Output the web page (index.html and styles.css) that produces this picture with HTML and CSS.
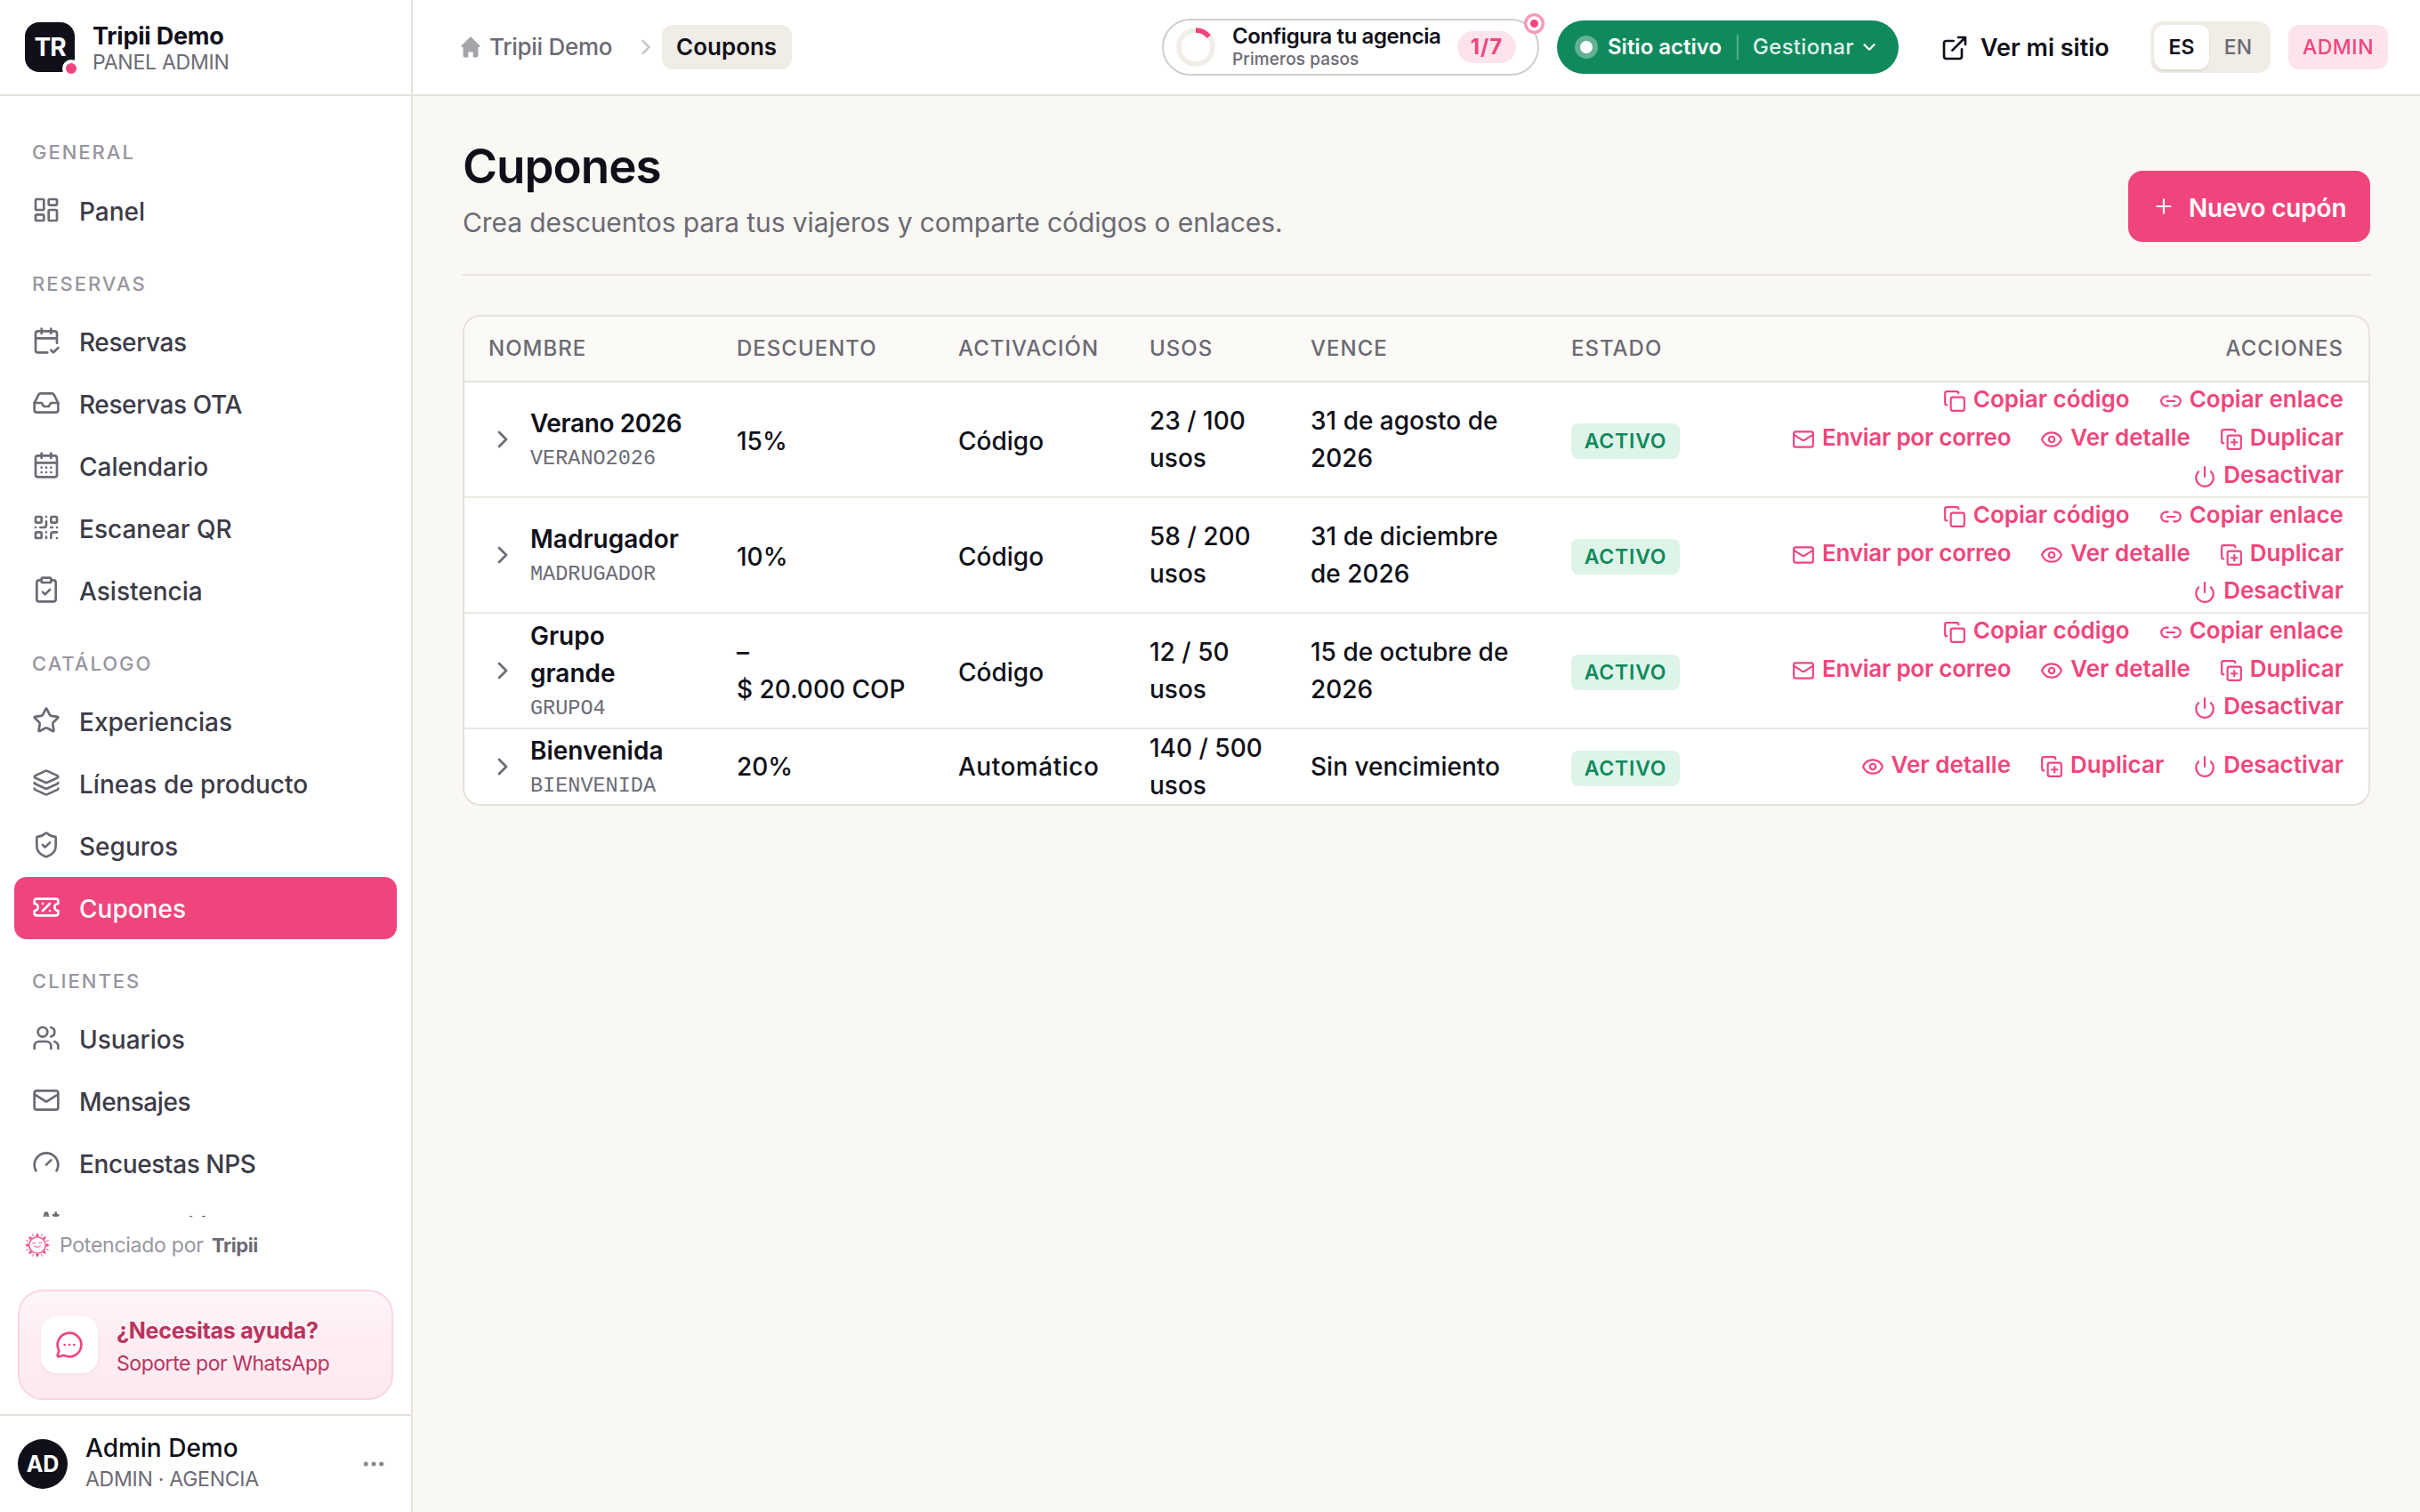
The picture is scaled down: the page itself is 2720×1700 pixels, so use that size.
FILE: index.html
```html
<!DOCTYPE html>
<html lang="es">
<head>
<meta charset="utf-8">
<title>Cupones</title>
<link rel="stylesheet" href="styles.css">
</head>
<body>
<svg class="defs" aria-hidden="true">
  <symbol id="grid" viewBox="0 0 24 24"><rect x="3" y="3" width="7" height="9" rx="1"/><rect x="14" y="3" width="7" height="5" rx="1"/><rect x="14" y="12" width="7" height="9" rx="1"/><rect x="3" y="16" width="7" height="5" rx="1"/></symbol>
  <symbol id="calcheck" viewBox="0 0 24 24"><path d="M8 2v4M16 2v4M21 14V6a2 2 0 0 0-2-2H5a2 2 0 0 0-2 2v14a2 2 0 0 0 2 2h8M3 10h18M16 20l2 2 4-4"/></symbol>
  <symbol id="inbox" viewBox="0 0 24 24"><path d="M22 12h-6l-2 3h-4l-2-3H2"/><path d="M5.45 5.11 2 12v6a2 2 0 0 0 2 2h16a2 2 0 0 0 2-2v-6l-3.45-6.89A2 2 0 0 0 16.76 4H7.24a2 2 0 0 0-1.79 1.11z"/></symbol>
  <symbol id="caldays" viewBox="0 0 24 24"><path d="M8 2v4M16 2v4M3 10h18M8 14h.01M12 14h.01M16 14h.01M8 18h.01M12 18h.01M16 18h.01"/><rect x="3" y="4" width="18" height="18" rx="2"/></symbol>
  <symbol id="qr" viewBox="0 0 24 24"><rect x="3" y="3" width="5" height="5" rx="1"/><rect x="16" y="3" width="5" height="5" rx="1"/><rect x="3" y="16" width="5" height="5" rx="1"/><path d="M21 16h-3a2 2 0 0 0-2 2v3M21 21v.01M12 7v3a2 2 0 0 1-2 2H7M3 12h.01M12 3h.01M12 16v.01M16 12h1M21 12v.01M12 21v-1"/></symbol>
  <symbol id="clip" viewBox="0 0 24 24"><rect x="8" y="2" width="8" height="4" rx="1"/><path d="M16 4h2a2 2 0 0 1 2 2v14a2 2 0 0 1-2 2H6a2 2 0 0 1-2-2V6a2 2 0 0 1 2-2h2M9 14l2 2 4-4"/></symbol>
  <symbol id="star" viewBox="0 0 24 24"><path d="M11.5 2.3a.53.53 0 0 1 .95 0l2.3 4.68a2.1 2.1 0 0 0 1.6 1.16l5.17.76a.53.53 0 0 1 .3.9l-3.74 3.64a2.1 2.1 0 0 0-.61 1.88l.88 5.14a.53.53 0 0 1-.77.56l-4.62-2.43a2.1 2.1 0 0 0-1.97 0L6.4 21.01a.53.53 0 0 1-.77-.56l.88-5.14a2.1 2.1 0 0 0-.61-1.88L2.16 9.8a.53.53 0 0 1 .3-.9l5.16-.76a2.1 2.1 0 0 0 1.6-1.16z"/></symbol>
  <symbol id="layers" viewBox="0 0 24 24"><path d="M12.83 2.18a2 2 0 0 0-1.66 0L2.6 6.08a1 1 0 0 0 0 1.83l8.58 3.91a2 2 0 0 0 1.66 0l8.58-3.9a1 1 0 0 0 0-1.83zM2 12a1 1 0 0 0 .58.91l8.6 3.91a2 2 0 0 0 1.65 0l8.58-3.9A1 1 0 0 0 22 12M2 17a1 1 0 0 0 .58.91l8.6 3.91a2 2 0 0 0 1.65 0l8.58-3.9A1 1 0 0 0 22 17"/></symbol>
  <symbol id="shield" viewBox="0 0 24 24"><path d="M20 13c0 5-3.5 7.5-7.66 8.95a1 1 0 0 1-.67-.01C7.5 20.5 4 18 4 13V6a1 1 0 0 1 1-1c2 0 4.5-1.2 6.24-2.72a1.17 1.17 0 0 1 1.52 0C14.51 3.81 17 5 19 5a1 1 0 0 1 1 1zM9 12l2 2 4-4"/></symbol>
  <symbol id="ticket" viewBox="0 0 24 24"><path d="M2 9a3 3 0 1 1 0 6v2a2 2 0 0 0 2 2h16a2 2 0 0 0 2-2v-2a3 3 0 1 1 0-6V7a2 2 0 0 0-2-2H4a2 2 0 0 0-2 2zM9 9h.01M15 9l-6 6M15 15h.01"/></symbol>
  <symbol id="users" viewBox="0 0 24 24"><path d="M16 21v-2a4 4 0 0 0-4-4H6a4 4 0 0 0-4 4v2M16 3.13a4 4 0 0 1 0 7.75M22 21v-2a4 4 0 0 0-3-3.87"/><circle cx="9" cy="7" r="4"/></symbol>
  <symbol id="mail" viewBox="0 0 24 24"><rect x="2" y="4" width="20" height="16" rx="2"/><path d="m22 7-8.99 5.73a2 2 0 0 1-2.01 0L2 7"/></symbol>
  <symbol id="gauge" viewBox="0 0 24 24"><path d="m12 14 4-4M3.34 19a10 10 0 1 1 17.32 0"/></symbol>
  <symbol id="sparkles" viewBox="0 0 24 24"><path d="M11.02 2.81a1 1 0 0 1 1.96 0l1.05 5.56a2 2 0 0 0 1.6 1.6l5.56 1.05a1 1 0 0 1 0 1.96l-5.56 1.05a2 2 0 0 0-1.6 1.6l-1.05 5.56a1 1 0 0 1-1.96 0l-1.05-5.56a2 2 0 0 0-1.6-1.6l-5.56-1.05a1 1 0 0 1 0-1.96l5.56-1.05a2 2 0 0 0 1.6-1.6zM20 2v4M22 4h-4"/></symbol>
  <symbol id="chat" viewBox="0 0 24 24"><path d="M2.99 16.34a2 2 0 0 1 .1 1.17l-1.07 3.29a1 1 0 0 0 1.24 1.17l3.41-1a2 2 0 0 1 1.1.09 10 10 0 1 0-4.78-4.72M8 12h.01M12 12h.01M16 12h.01"/></symbol>
  <symbol id="ext" viewBox="0 0 24 24"><path d="M15 3h6v6M10 14 21 3M18 13v6a2 2 0 0 1-2 2H5a2 2 0 0 1-2-2V8a2 2 0 0 1 2-2h6"/></symbol>
  <symbol id="right" viewBox="0 0 24 24"><path d="m9 18 6-6-6-6"/></symbol>
  <symbol id="down" viewBox="0 0 24 24"><path d="m6 9 6 6 6-6"/></symbol>
  <symbol id="plus" viewBox="0 0 24 24"><path d="M5 12h14M12 5v14"/></symbol>
  <symbol id="copy" viewBox="0 0 24 24"><rect x="8" y="8" width="14" height="14" rx="2"/><path d="M4 16c-1.1 0-2-.9-2-2V4c0-1.1.9-2 2-2h10c1.1 0 2 .9 2 2"/></symbol>
  <symbol id="copyplus" viewBox="0 0 24 24"><path d="M15 12v6M12 15h6"/><rect x="8" y="8" width="14" height="14" rx="2"/><path d="M4 16c-1.1 0-2-.9-2-2V4c0-1.1.9-2 2-2h10c1.1 0 2 .9 2 2"/></symbol>
  <symbol id="link" viewBox="0 0 24 24"><path d="M9 17H7A5 5 0 0 1 7 7h2M15 7h2a5 5 0 1 1 0 10h-2M8 12h8"/></symbol>
  <symbol id="eye" viewBox="0 0 24 24"><path d="M2.06 12.35a1 1 0 0 1 0-.7 10.75 10.75 0 0 1 19.88 0 1 1 0 0 1 0 .7 10.75 10.75 0 0 1-19.88 0"/><circle cx="12" cy="12" r="3"/></symbol>
  <symbol id="power" viewBox="0 0 24 24"><path d="M12 2v10M18.4 6.6a9 9 0 1 1-12.77.04"/></symbol>
  <symbol id="dots" viewBox="0 0 24 24"><circle cx="5" cy="12" r="1"/><circle cx="12" cy="12" r="1"/><circle cx="19" cy="12" r="1"/></symbol>
</svg>
<div class="app">
  <aside class="side">
    <div class="brand">
      <div class="logo">TR<i class="logo-dot"></i></div>
      <div class="brand-text"><span class="brand-name">Tripii Demo</span><span class="brand-sub">PANEL ADMIN</span></div>
    </div>
    <nav class="nav">
      <div class="label first">GENERAL</div>
      <a class="item"><svg><use href="#grid"/></svg><span>Panel</span></a>
      <div class="label">RESERVAS</div>
      <a class="item tight"><svg><use href="#calcheck"/></svg><span>Reservas</span></a>
      <a class="item tight"><svg><use href="#inbox"/></svg><span>Reservas OTA</span></a>
      <a class="item"><svg><use href="#caldays"/></svg><span>Calendario</span></a>
      <a class="item"><svg><use href="#qr"/></svg><span>Escanear QR</span></a>
      <a class="item"><svg><use href="#clip"/></svg><span>Asistencia</span></a>
      <div class="label">CATÁLOGO</div>
      <a class="item"><svg><use href="#star"/></svg><span>Experiencias</span></a>
      <a class="item"><svg><use href="#layers"/></svg><span>Líneas de producto</span></a>
      <a class="item"><svg><use href="#shield"/></svg><span>Seguros</span></a>
      <a class="item active"><svg><use href="#ticket"/></svg><span>Cupones</span></a>
      <div class="label">CLIENTES</div>
      <a class="item"><svg><use href="#users"/></svg><span>Usuarios</span></a>
      <a class="item tight"><svg><use href="#mail"/></svg><span>Mensajes</span></a>
      <a class="item tight"><svg><use href="#gauge"/></svg><span>Encuestas NPS</span></a>
      <a class="item cut"><svg><use href="#sparkles"/></svg><span>Adecuación</span></a>
    </nav>
    <div class="powered">
      <svg class="sun" viewBox="0 0 28 28"><circle cx="14" cy="14" r="9.2"/><path class="rays" d="M14 0l2 4h-4zM14 28l2-4h-4zM0 14l4-2v4zM28 14l-4-2v4zM4.100 4.100l4.200 1.400-2.800 2.800zM23.900 4.100l-4.200 1.400 2.800 2.800zM4.100 23.900l4.200-1.400-2.800-2.800zM23.900 23.900l-4.200-1.400 2.800-2.800z"/><path class="thin" d="M8.700 1.800l.7 1.700M19.300 1.800l-.7 1.700M8.700 26.200l.7-1.700M19.300 26.200l-.7-1.700M1.800 8.700l1.700.7M1.800 19.300l1.700-.7M26.200 8.700l-1.700.7M26.200 19.300l-1.700-.7M8.500 11.800q1.300-1.500 3 0M16 11q1.800-.8 3 .7M10.500 15q4 3 7-.5"/></svg>
      <span class="pow-a">Potenciado por</span><span class="pow-b">Tripii</span>
    </div>
    <div class="help">
      <div class="help-icon"><svg><use href="#chat"/></svg></div>
      <div class="help-text"><span class="help-title">¿Necesitas ayuda?</span><span class="help-sub">Soporte por WhatsApp</span></div>
    </div>
    <div class="user">
      <div class="avatar">AD</div>
      <div class="user-text"><span class="user-name">Admin Demo</span><span class="user-role">ADMIN · AGENCIA</span></div>
      <svg class="more"><use href="#dots"/></svg>
    </div>
  </aside>
  <div class="main">
    <header class="top">
      <div class="crumbs">
        <svg class="home" viewBox="0 0 22 24"><path d="M11 0 21.500 10.500Q22 12 20.500 12H19.500V21.500Q19.500 23.500 17.500 23.500H13.700V17.500H8.300V23.500H4.500Q2.500 23.500 2.500 21.500V12H1.500Q0 12 .5 10.500Z"/></svg>
        <span class="crumb">Tripii Demo</span>
        <svg class="sep"><use href="#right"/></svg>
        <span class="crumb-now">Coupons</span>
      </div>
      <div class="setup">
        <svg class="ring" viewBox="0 0 44 44"><circle cx="22" cy="22" r="19"/><path d="M22 3A19 19 0 0 1 36.800 10.200"/></svg>
        <div class="setup-text"><span class="setup-title">Configura tu agencia</span><span class="setup-sub">Primeros pasos</span></div>
        <span class="count">1/7</span>
        <i class="ping"></i>
      </div>
      <div class="site"><i class="live"></i><span class="site-a">Sitio activo</span><i class="bar"></i><span class="site-b">Gestionar</span><svg class="caret"><use href="#down"/></svg></div>
      <div class="view"><svg><use href="#ext"/></svg><span>Ver mi sitio</span></div>
      <div class="lang"><span class="on">ES</span><span class="off">EN</span></div>
      <div class="role">ADMIN</div>
    </header>
    <main class="page">
      <div class="head">
        <div><h1>Cupones</h1><p class="lead">Crea descuentos para tus viajeros y comparte códigos o enlaces.</p></div>
        <button class="new"><svg><use href="#plus"/></svg><span>Nuevo cupón</span></button>
      </div>
      <div class="table">
        <div class="row thead"><span>NOMBRE</span><span>DESCUENTO</span><span>ACTIVACIÓN</span><span>USOS</span><span>VENCE</span><span>ESTADO</span><span class="end">ACCIONES</span></div>
        <div class="row">
          <div class="name"><svg><use href="#right"/></svg><div><strong class="snug">Verano 2026</strong><code>VERANO2026</code></div></div>
          <div class="one">15%</div><div class="one">Código</div><div>23 / 100<br>usos</div><div>31 de agosto de<br>2026</div>
          <div><span class="badge">ACTIVO</span></div>
          <div class="acts">
            <div><a><svg><use href="#copy"/></svg>Copiar código</a><a><svg><use href="#link"/></svg>Copiar enlace</a></div>
            <div><a class="snug"><svg><use href="#mail"/></svg>Enviar por correo</a><a><svg><use href="#eye"/></svg>Ver detalle</a><a><svg><use href="#copyplus"/></svg>Duplicar</a></div>
            <div><a><svg><use href="#power"/></svg>Desactivar</a></div>
          </div>
        </div>
        <div class="row">
          <div class="name"><svg><use href="#right"/></svg><div><strong>Madrugador</strong><code>MADRUGADOR</code></div></div>
          <div class="one">10%</div><div class="one">Código</div><div>58 / 200<br>usos</div><div>31 de diciembre<br>de 2026</div>
          <div><span class="badge">ACTIVO</span></div>
          <div class="acts">
            <div><a><svg><use href="#copy"/></svg>Copiar código</a><a><svg><use href="#link"/></svg>Copiar enlace</a></div>
            <div><a class="snug"><svg><use href="#mail"/></svg>Enviar por correo</a><a><svg><use href="#eye"/></svg>Ver detalle</a><a><svg><use href="#copyplus"/></svg>Duplicar</a></div>
            <div><a><svg><use href="#power"/></svg>Desactivar</a></div>
          </div>
        </div>
        <div class="row">
          <div class="name"><svg><use href="#right"/></svg><div><strong>Grupo<br>grande</strong><code>GRUPO4</code></div></div>
          <div>–<br>$ 20.000 COP</div><div class="one">Código</div><div>12 / 50<br>usos</div><div>15 de octubre de<br>2026</div>
          <div><span class="badge">ACTIVO</span></div>
          <div class="acts">
            <div><a><svg><use href="#copy"/></svg>Copiar código</a><a><svg><use href="#link"/></svg>Copiar enlace</a></div>
            <div><a class="snug"><svg><use href="#mail"/></svg>Enviar por correo</a><a><svg><use href="#eye"/></svg>Ver detalle</a><a><svg><use href="#copyplus"/></svg>Duplicar</a></div>
            <div><a><svg><use href="#power"/></svg>Desactivar</a></div>
          </div>
        </div>
        <div class="row last">
          <div class="name"><svg><use href="#right"/></svg><div><strong>Bienvenida</strong><code>BIENVENIDA</code></div></div>
          <div class="one">20%</div><div class="one auto">Automático</div><div>140 / 500<br>usos</div><div class="one">Sin vencimiento</div>
          <div><span class="badge">ACTIVO</span></div>
          <div class="acts">
            <div><a><svg><use href="#eye"/></svg>Ver detalle</a><a><svg><use href="#copyplus"/></svg>Duplicar</a><a><svg><use href="#power"/></svg>Desactivar</a></div>
          </div>
        </div>
      </div>
    </main>
  </div>
</div>
</body>
</html>
```
FILE: styles.css
```css
* { box-sizing: border-box; }
body { margin: 0; background: #faf8f3; color: #10101a; font: 450 28px/42px Inter, "Liberation Sans", sans-serif; }
i { display: block; }
svg { fill: none; stroke: currentColor; stroke-width: 2; stroke-linecap: round; stroke-linejoin: round; flex: none; display: block; }
.defs { position: absolute; width: 0; height: 0; }
.app { display: flex; width: 2720px; height: 1700px; overflow: hidden; }

.side { width: 464px; flex: none; background: #fff; border-right: 2px solid #e5e2dc; display: flex; flex-direction: column; }
.brand { height: 108px; flex: none; border-bottom: 2px solid #e5e2dc; padding: 0 28px; display: flex; align-items: center; gap: 20px; }
.logo { position: relative; width: 56px; height: 56px; border-radius: 16px; background: #10101a; color: #fff; font-weight: 700; font-size: 28px; line-height: 57px; text-align: center; letter-spacing: -1px; }
.logo-dot { position: absolute; right: -6px; bottom: -6px; width: 20px; height: 20px; border-radius: 50%; background: #f0457c; border: 4px solid #fff; }
.brand-text, .help-text, .user-text, .setup-text { display: flex; flex-direction: column; white-space: nowrap; }
.brand-text { padding-top: 3px; }
.brand-name { font-weight: 650; font-size: 27px; line-height: 31px; letter-spacing: -.2px; }
.brand-sub { font-weight: 400; font-size: 23px; line-height: 28px; color: #6b6a75; letter-spacing: -.25px; }

.nav { height: 1260px; flex: none; overflow: hidden; padding: 0 16px; }
.label { height: 77px; padding: 30px 20px 0; font-weight: 450; font-size: 22px; line-height: 34px; letter-spacing: 2px; color: #97969f; }
.label.first { height: 94px; padding-top: 46px; }
.item { height: 70px; border-radius: 14px; padding-left: 20px; display: flex; align-items: center; gap: 21px; color: #3c3b48; white-space: nowrap; }
.item span { padding-top: 1px; }
.item.tight { letter-spacing: -.4px; }
.item.cut { letter-spacing: .5px; }
.item svg { width: 32px; height: 32px; color: #6b6a75; margin-bottom: 3px; }
.item.active { background: #f0457c; color: #fff; font-weight: 550; }
.item.active svg { color: #fff; }

.powered { height: 64px; padding: 0 28px; display: flex; align-items: center; white-space: nowrap; }
.sun { width: 28px; height: 28px; color: #f0457c; stroke-width: 1.3; margin-right: 11px; }
.sun .rays { fill: currentColor; stroke: none; }
.sun .thin { stroke-width: 1; }
.pow-a { font-weight: 400; font-size: 23px; color: #97969f; width: 171px; letter-spacing: -.25px; }
.pow-b { font-weight: 700; font-size: 22px; color: #6b6a75; letter-spacing: -.4px; }

.help { margin: 18px 20px 16px; height: 124px; border: 2px solid #fcd5e1; border-radius: 28px; background: linear-gradient(#fff6f8, #feedf3 45%, #fdeaf1); padding: 0 24px; display: flex; align-items: center; gap: 21px; color: #b8345f; }
.help-icon { width: 64px; height: 64px; border-radius: 18px; background: #fff; box-shadow: 0 2px 4px rgba(16,16,26,.05); display: flex; align-items: center; justify-content: center; color: #f0457c; }
.help-icon svg { width: 32px; height: 32px; }
.help-text { padding-top: 4px; }
.help-title { font-weight: 700; font-size: 25px; line-height: 38px; letter-spacing: -.25px; }
.help-sub { font-weight: 400; font-size: 23px; line-height: 36px; letter-spacing: -.45px; }

.user { flex: 1; border-top: 2px solid #e5e2dc; padding: 0 27px 0 20px; display: flex; align-items: center; }
.avatar { width: 56px; height: 56px; border-radius: 50%; background: #10101a; color: #fff; font-weight: 700; font-size: 25px; line-height: 57px; text-align: center; }
.user-text { margin-left: 20px; flex: 1; }
.user-name { font-weight: 550; line-height: 35px; }
.user-role { font-weight: 400; font-size: 23px; line-height: 35px; color: #6b6a75; letter-spacing: -.25px; }
.more { width: 30px; height: 30px; color: #8a8993; }

.main { flex: 1; min-width: 0; display: flex; flex-direction: column; }
.top { height: 108px; flex: none; background: #fff; border-bottom: 2px solid #e5e2dc; padding: 0 36px 0 54px; display: flex; align-items: center; white-space: nowrap; }
.crumbs { display: flex; align-items: center; flex: 1; }
.home { width: 22px; height: 24px; fill: #a5a4aa; stroke: none; margin-right: 10px; }
.crumb { font-size: 26px; color: #6b6a75; width: 160px; letter-spacing: -.3px; }
.sep { width: 28px; height: 28px; color: #c2c1c6; margin: 0 4px 0 2px; }
.crumb-now { height: 50px; width: 146px; padding-left: 16px; border-radius: 12px; background: #f0ede6; font-weight: 600; font-size: 26px; line-height: 50px; }

.setup { position: relative; width: 424px; height: 64px; border: 2px solid #d0cfcd; border-radius: 32px; padding: 0 24px 0 14px; display: flex; align-items: center; margin-right: 20px; }
.ring { width: 44px; height: 44px; stroke: #f0ede6; stroke-width: 5.500; }
.ring path { stroke: #f0457c; stroke-linecap: butt; }
.setup-text { margin-left: 19px; flex: 1; padding-top: 1px; }
.setup-title { font-weight: 600; font-size: 24px; line-height: 27px; letter-spacing: -.4px; }
.setup-sub { font-size: 19px; line-height: 26px; color: #6b6a75; letter-spacing: .1px; }
.count { width: 66px; height: 36px; border-radius: 18px; background: #fde4ec; color: #f0457c; font-weight: 650; font-size: 24px; line-height: 36px; text-align: center; letter-spacing: 1px; }
.ping { position: absolute; right: -8px; top: -8px; width: 23px; height: 23px; border-radius: 50%; background: #f0457c; border: 3px solid #f799b8; box-shadow: inset 0 0 0 4px #fff; }

.site { width: 384px; height: 60px; border-radius: 30px; background: #108a5d; color: #fff; padding-left: 20px; display: flex; align-items: center; font-size: 24px; margin-right: 47px; }
.live { width: 26px; height: 26px; border-radius: 50%; background: #fff; border: 6px solid #62b194; margin-right: 11px; }
.site-a { font-weight: 600; width: 145px; }
.bar { width: 2px; height: 28px; background: #57ad8d; margin-right: 16px; }
.site-b { color: #dff0e9; width: 120px; letter-spacing: .3px; }
.caret { width: 22px; height: 22px; stroke-width: 2.500; }
.view { width: 236px; display: flex; align-items: center; gap: 13px; font-weight: 580; font-size: 27px; padding-top: 1px; }
.view svg { width: 32px; height: 32px; }
.lang { width: 135px; height: 58px; border-radius: 14px; background: #f0ede6; padding: 4px; display: flex; font-size: 23px; line-height: 50px; text-align: center; margin-right: 20px; }
.on { width: 62px; height: 50px; border-radius: 12px; background: #fff; font-weight: 600; box-shadow: 0 2px 3px rgba(16,16,26,.08); }
.off { flex: 1; color: #6b6a75; font-weight: 500; }
.role { width: 112px; height: 50px; border-radius: 12px; background: #fde4ec; color: #f0457c; font-weight: 550; font-size: 23px; line-height: 50px; text-align: center; letter-spacing: .5px; }

.page { padding: 42px 56px 0; }
.head { height: 160px; border-bottom: 2px solid #e5e2dc; display: flex; justify-content: space-between; }
h1 { margin: 1px 0 0; font-weight: 600; font-size: 53px; line-height: 72px; letter-spacing: -1px; }
.lead { margin: 4px 0 0; font-weight: 380; font-size: 30px; line-height: 46px; color: #6b6a75; letter-spacing: -.1px; }
.new { width: 272px; height: 80px; margin-top: 42px; border: 0; border-radius: 16px; background: #f0457c; color: #fff; font: inherit; font-weight: 580; display: flex; align-items: center; padding: 0 27px; gap: 15px; white-space: nowrap; letter-spacing: -.2px; }
.new span { padding-top: 3px; }
.new svg { width: 26px; height: 26px; }

.table { margin-top: 44px; height: 552px; border: 2px solid #e5e2dc; border-radius: 20px; background: #fff; overflow: hidden; }
.row { display: grid; grid-template-columns: 279px 249px 215px 181px 293px 240px 1fr; height: 130px; border-bottom: 2px solid #ebe8e1; align-items: center; padding: 0 28px 0 27px; white-space: nowrap; }
.row.last { height: 84px; border: 0; }
.thead { height: 74px; background: #fbfaf6; border-color: #e5e2dc; font-size: 24px; color: #6b6a75; letter-spacing: 1px; padding-bottom: 1px; }
.end { text-align: right; }
.one { padding-top: 3px; }
.last .one { padding-top: 0; }
.auto { letter-spacing: .5px; }
.name { display: flex; align-items: center; gap: 15px; }
.name > div { padding-top: 2px; }
.name svg { width: 32px; height: 32px; color: #6b6a75; }
.name strong, .name code { display: block; }
.name strong { font-weight: 580; }
.name .snug { letter-spacing: -.4px; }
.name code { font: 400 23.500px/38px "Liberation Mono", monospace; color: #6b6a75; }
.badge { display: block; margin-top: 4px; width: 122px; height: 40px; border-radius: 8px; background: #dff4e9; color: #108a5d; font-weight: 600; font-size: 23px; line-height: 40px; text-align: center; letter-spacing: .8px; }
.acts { margin: -2px 0 2px; color: #f0457c; font-weight: 580; font-size: 26px; line-height: 42.660px; }
.acts div { display: flex; justify-content: flex-end; gap: 33px; height: 42.660px; }
.acts a { display: flex; align-items: center; gap: 8px; }
.acts .snug { letter-spacing: -.25px; }
.acts svg { width: 26px; height: 26px; margin-top: 3px; }
```
